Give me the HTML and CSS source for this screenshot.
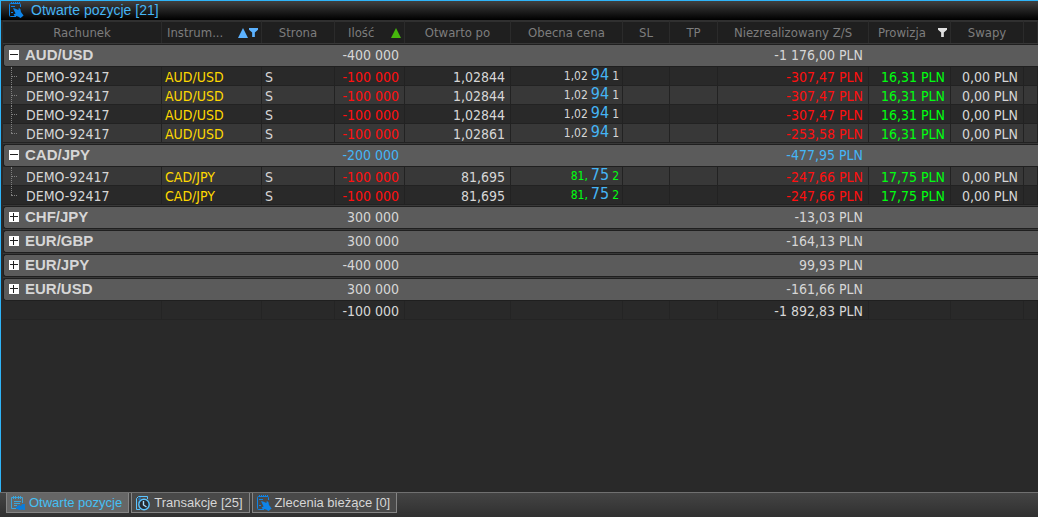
FILE: index.html
```html
<!DOCTYPE html>
<html lang="pl">
<head>
<meta charset="utf-8">
<title>Otwarte pozycje</title>
<link rel="stylesheet" href="styles.css">
</head>
<body>
<svg class="defs" aria-hidden="true">
  <symbol id="order" viewBox="0 0 16 16">
    <path d="M12.500 5V2.500a1 1 0 0 0-1-1h-9a1 1 0 0 0-1 1v11a1 1 0 0 0 1 1H8" fill="none" stroke="currentColor"/>
    <path d="M3 0h1v2H3zM5 0h1v2H5zM7 0h1v2H7zM9 0h1v2H9zM11 0h1v2h-1zM3 4h4v1H3zM3 10h2v1H3z" fill="currentColor"/>
    <path d="M5 6l2 .4L10.400 8l.4-2 1.600 1 .6 3 2.600 3.600-3 2.400-2.600-1.600-3.600-.6-.8-1.600 2-.6-1-2z" fill="currentColor"/>
  </symbol>
  <symbol id="note" viewBox="0 0 16 16">
    <path d="M12.500 8V2.500h-11v11H6" fill="none" stroke="#3aa5dc"/>
    <path d="M3 1h1v3H3zM5 1h1v3H5zM8 1h1v3H8zM10 1h1v3h-1zM4 6h7v1H4zM4 8h6v1H4zM4 10h3v1H4z" fill="#3aa5dc"/>
    <path d="M6 12l3-2 2 1 1-2h3v6h-2l-1-1-1 1H9l-1-1H6z" fill="#0e7cd8"/>
  </symbol>
  <symbol id="history" viewBox="0 0 16 16">
    <path d="M12.500 4V1.500h-9l-2 2v11H5" fill="none" stroke="#5cc4ff"/>
    <path d="M6 3H4v2h2v2H3" fill="none" stroke="#0e7cd8"/>
    <circle cx="9" cy="9.500" r="5.200" fill="#252a30" stroke="#5cc4ff" stroke-width="1.400"/>
    <path d="M8.500 6v4l3 2" fill="none" stroke="#a5ddff" stroke-width="1.400"/>
  </symbol>
  <symbol id="up" viewBox="0 0 10 10"><path d="M5 0l5 10H0z" fill="currentColor"/></symbol>
  <symbol id="funnel" viewBox="0 0 10 10"><path d="M0 0h10v2L6.500 5v5h-3V5L0 2z" fill="currentColor"/></symbol>
</svg>
<div class="app">
  <main class="panel">
    <header class="title"><svg class="icon"><use href="#order"/></svg><h1>Otwarte pozycje [21]</h1></header>
    <div class="content">
      <table class="grid">
        <colgroup><col class="c-account"><col class="c-symbol"><col class="c-side"><col class="c-qty"><col class="c-open"><col class="c-price"><col class="c-sl"><col class="c-tp"><col class="c-pl"><col class="c-fee"><col class="c-swap"><col></colgroup>
        <thead><tr>
          <th>Rachunek</th>
          <th><span class="head">Instrum...<span class="marks"><svg class="mark"><use href="#up"/></svg><svg class="mark small"><use href="#funnel"/></svg></span></span></th>
          <th>Strona</th>
          <th><span class="head qty">Ilość<svg class="mark green"><use href="#up"/></svg></span></th>
          <th>Otwarto po</th><th>Obecna cena</th><th>SL</th><th>TP</th><th>Niezrealizowany Z/S</th>
          <th><span class="head fee">Prowizja<svg class="mark small light"><use href="#funnel"/></svg></span></th>
          <th>Swapy</th><th></th>
        </tr></thead>
        <tbody id="rows"></tbody>
      </table>
    </div>
  </main>
  <nav class="tabs">
    <button class="tab active"><svg class="icon"><use href="#note"/></svg>Otwarte pozycje</button>
    <button class="tab"><svg class="icon"><use href="#history"/></svg>Transakcje [25]</button>
    <button class="tab"><svg class="icon"><use href="#order"/></svg>Zlecenia bieżące [0]</button>
  </nav>
</div>
<script src="app.js"></script>
</body>
</html>
```
FILE: styles.css
```css
* { box-sizing: border-box; }
body {
  margin: 0;
  background: #292929;
  color: #d6d6d6;
  font: 14px "DejaVu Sans Condensed", "DejaVu Sans", sans-serif;
}
.defs { display: none; }
.icon { width: 16px; height: 16px; flex: none; color: #0e84e8; }
.app { min-height: 100vh; display: flex; flex-direction: column; }
.panel {
  flex: 1;
  border-top: 1px solid #2fb4f8;
  border-left: 1px solid #2fb4f8;
}
.title {
  height: 19px;
  padding-left: 7px;
  display: flex;
  align-items: flex-start;
  gap: 7px;
  background: linear-gradient(#404040, #000);
}
.title .icon { margin-top: 1px; }
.title h1 { margin: 0; color: #45b5f5; font: 14px/18px "Liberation Sans", Arial, sans-serif; }
.content { padding-left: 2px; }

.grid { width: 100%; table-layout: fixed; border-spacing: 0; }
.c-account { width: 159px; }
.c-symbol { width: 100px; }
.c-side { width: 73px; }
.c-qty { width: 70px; }
.c-open { width: 106px; }
.c-price { width: 112px; }
.c-sl { width: 47px; }
.c-tp { width: 48px; }
.c-pl { width: 151px; }
.c-fee { width: 82px; }
.c-swap { width: 73px; }

.grid th, .grid td {
  padding: 0 5px;
  border-right: 1px solid #222;
  white-space: nowrap;
}
.grid thead th {
  height: 23px;
  border-top: 2px solid #303030;
  border-right-color: #2b2b2b;
  background: #1f1f1f;
  color: #7d7d7d;
  font-size: 13px;
  font-weight: normal;
  line-height: 20px;
}
.head { display: flex; align-items: center; justify-content: space-between; }
.head.qty { padding-left: 8px; margin-right: -2px; }
.head.fee { padding-left: 4px; margin-right: -2px; }
.marks { display: flex; gap: 1px; align-items: center; color: #5cb2ff; margin-right: -2px; }
.mark { width: 10px; height: 10px; flex: none; }
.mark.small { width: 9px; height: 9px; }
.green { color: #46b80c; }
.light { color: #e0e0e0; }

.row td {
  height: 19px;
  padding-top: 2px;
  border-bottom: 1px solid #222;
  line-height: 16px;
  background: #292929;
  text-align: right;
}
.row.alt td { background: #383838; }
.row td.account { position: relative; padding-left: 23px; text-align: left; }
.row td.symbol { padding-left: 3px; text-align: left; color: #ffd800; }
.row td.side { padding-left: 3px; text-align: left; }
.row td.price { padding-top: 0; padding-right: 3px; font-size: 12px; line-height: 18px; }
.branch::before, .branch::after { content: ""; position: absolute; left: 8px; top: 0; }
.branch::before { height: 18px; border-left: 1px dotted #808080; }
.branch::after { top: 9px; width: 6px; border-top: 1px dotted #808080; }
.branch.last::before { height: 9px; }
.pip { color: #45b5f5; font-size: 16px; line-height: 16px; margin: 0 3px; }
.row td.neg { color: #ff1010; }
.row td.pos { color: #00ff10; }
.row td.total { border-color: #242424; }

.spacer td { height: 1px; padding: 0; border: 0; background: #383838; }
.group th, .group td {
  height: 23px;
  border: solid #1f1f1f;
  border-width: 1px 0;
  background: #5b5b5b;
  line-height: 19px;
  text-align: right;
}
.group th {
  padding-bottom: 2px;
  border-left: 1px solid #1f1f1f;
  border-radius: 3px 0 0 3px;
  font: bold 15px/19px "Liberation Sans", Arial, sans-serif;
  text-align: left;
}
.group td { padding-right: 6px; }
.group.selected td { color: #45b5f5; }
.name { display: flex; align-items: center; gap: 6px; }
.toggle { width: 10px; height: 10px; margin: 0; padding: 0; border: 0; background: #fff; display: flex; color: #222; }
.toggle svg { width: 10px; height: 10px; }

.tabs {
  height: 25px;
  padding: 0 0 4px 6px;
  display: flex;
  gap: 2px;
  border-top: 1px solid #707070;
  background: linear-gradient(#444, #303030);
}
.tab {
  display: flex;
  align-items: center;
  gap: 3px;
  padding: 0 6px 0 3px;
  border: solid #858585;
  border-width: 0 1px 1px;
  background: #494949;
  color: #d6d6d6;
  font: 13px/19px "Liberation Sans", Arial, sans-serif;
}
.tab.active { background: #666; color: #45c0f5; }
```
FILE: app.js
```js
const groups = [
  { name: "AUD/USD", qty: "-400 000", pl: "-1 176,00 PLN", open: true, fee: "16,31 PLN", price: ["1,02", "94", "1"],
    rows: [["1,02844", "-307,47 PLN"], ["1,02844", "-307,47 PLN"], ["1,02844", "-307,47 PLN"], ["1,02861", "-253,58 PLN"]] },
  { name: "CAD/JPY", qty: "-200 000", pl: "-477,95 PLN", open: true, selected: true, rising: true, fee: "17,75 PLN", price: ["81,", "75", "2"],
    rows: [["81,695", "-247,66 PLN"], ["81,695", "-247,66 PLN"]] },
  { name: "CHF/JPY", qty: "300 000", pl: "-13,03 PLN", rows: [] },
  { name: "EUR/GBP", qty: "300 000", pl: "-164,13 PLN", rows: [] },
  { name: "EUR/JPY", qty: "-400 000", pl: "99,93 PLN", rows: [] },
  { name: "EUR/USD", qty: "300 000", pl: "-161,66 PLN", rows: [] }
];

let html = "";
groups.forEach((g, n) => {
  const cross = g.open ? "" : "M4 1h1v3H4zM4 5h1v4H4z";
  html += `<tr class="spacer"><td colspan="12"></td></tr>
    <tr class="group ${g.selected ? "selected" : ""}">
      <th colspan="3" scope="rowgroup"><span class="name"><button class="toggle" aria-label="${g.name}" aria-expanded="${!!g.open}"><svg viewBox="0 0 10 10"><path d="M1 4h8v1H1z${cross}" fill="currentColor"/></svg></button>${g.name}</span></th>
      <td>${g.qty}</td><td colspan="4"></td><td>${g.pl}</td><td colspan="3"></td></tr>`;
  g.rows.forEach(([opened, pl], i) => {
    html += `<tr class="row ${(i + n) % 2 ? "alt" : ""}">
      <td class="account branch ${i === g.rows.length - 1 ? "last" : ""}">DEMO-92417</td>
      <td class="symbol">${g.name}</td><td class="side">S</td><td class="neg">-100 000</td><td>${opened}</td>
      <td class="price ${g.rising ? "pos" : ""}">${g.price[0]}<span class="pip">${g.price[1]}</span>${g.price[2]}</td>
      <td></td><td></td><td class="neg">${pl}</td><td class="pos">${g.fee}</td><td>0,00 PLN</td><td></td></tr>`;
  });
});
const sums = ["", "", "", "-100 000", "", "", "", "", "-1 892,83 PLN", "", "", ""];
html += `<tr class="row">${sums.map(s => `<td class="total">${s}</td>`).join("")}</tr>`;
document.getElementById("rows").innerHTML = html;
```
